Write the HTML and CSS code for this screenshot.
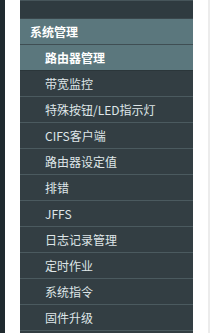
FILE: index.html
```html
<!DOCTYPE html>
<html lang="zh-cmn-Hans">
<head>
    <meta charset="UTF-8">
    <title>系统管理</title>
    <link rel="stylesheet" href="styles.css">
</head>
<body>
    <div class="page">
        <div class="page-edge"></div>
        <div class="page-gap"></div>
        <nav class="menu">
            <div class="menu-top"></div>
            <h3 class="menu-title">系统管理</h3>
            <ul class="menu-list">
                <li class="menu-item active">路由器管理</li>
                <li class="menu-item">带宽监控</li>
                <li class="menu-item">特殊按钮/LED指示灯</li>
                <li class="menu-item">CIFS客户端</li>
                <li class="menu-item">路由器设定值</li>
                <li class="menu-item">排错</li>
                <li class="menu-item">JFFS</li>
                <li class="menu-item">日志记录管理</li>
                <li class="menu-item">定时作业</li>
                <li class="menu-item">系统指令</li>
                <li class="menu-item">固件升级</li>
            </ul>
        </nav>
        <div class="page-gap"></div>
        <div class="page-scroll"></div>
    </div>
</body>
</html>
```

FILE: styles.css
```css
html, body {
    margin: 0;
    height: 100%;
    overflow: hidden;
}
body {
    background-color: #fff;
    font-family: "Microsoft YaHei", "Noto Sans CJK SC", sans-serif;
    color: #dfe6e8;
}
.page {
    display: flex;
    height: 333px;
}
.page-edge {
    width: 5px;
    background-color: #1f2a2f;
}
.page-gap {
    width: 15px;
    background-color: #fff;
}
.page-scroll {
    flex: 1;
    background-color: #ececec;
    margin-left: 0;
    max-width: 2px;
}
.menu {
    width: 173px;
    background-color: #333e43;
}
.menu-top {
    height: 17px;
    border-top: 1px solid #46555a;
    border-bottom: 1px solid #3a474c;
    background-color: #2f3b40;
}
.menu-title {
    margin: 0;
    height: 25px;
    line-height: 25px;
    padding-left: 10px;
    font-size: 12px;
    font-weight: bold;
    color: #fff;
    background-color: #5b777d;
    border-bottom: 1px solid #3f4e53;
}
.menu-list {
    list-style: none;
    margin: 0;
    padding: 0;
}
.menu-item {
    height: 25px;
    line-height: 25px;
    padding-left: 25px;
    font-size: 12px;
    border-bottom: 1px solid #4b5a5f;
    white-space: nowrap;
}
.menu-item.active {
    background-color: #5b777d;
    color: #fff;
    font-weight: bold;
    border-bottom-color: #2b363a;
}
```
